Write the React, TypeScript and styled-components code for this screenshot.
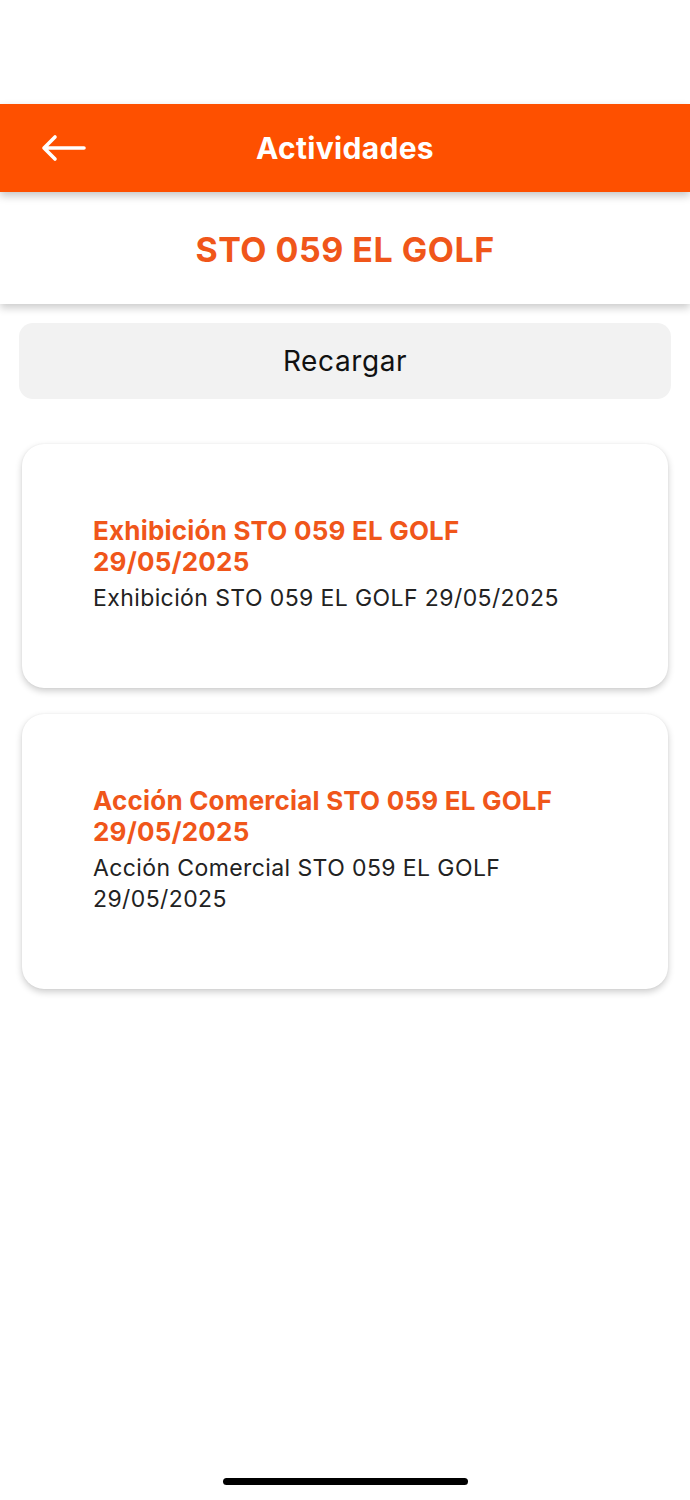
import React from "react";
import styled, { createGlobalStyle } from "styled-components";

const ORANGE = "#fe5000";
const TEXT_ORANGE = "#f0561a";

interface Activity {
  id: number;
  title: string;
  description: string;
}

const activities: Activity[] = [
  {
    id: 1,
    title: "Exhibición STO 059 EL GOLF 29/05/2025",
    description: "Exhibición STO 059 EL GOLF 29/05/2025"
  },
  {
    id: 2,
    title: "Acción Comercial STO 059 EL GOLF 29/05/2025",
    description: "Acción Comercial STO 059 EL GOLF 29/05/2025"
  }
];

const GlobalStyle = createGlobalStyle`
  html, body {
    margin: 0;
    padding: 0;
    background: #fff;
  }
  body {
    font-family: Inter, "Liberation Sans", Arial, sans-serif;
    -webkit-font-smoothing: antialiased;
  }
`;

const App: React.FC = () => {
  return (
    <>
      <GlobalStyle />
      <Screen>
        <StatusSpace />
        <TopBar>
          <BackButton aria-label="Volver">
            <svg width="46" height="28" viewBox="0 0 46 28" fill="none">
              <path
                d="M44 14H4M15 3L4 14l11 11"
                stroke="#fff"
                strokeWidth="3.6"
                strokeLinecap="round"
                strokeLinejoin="round"
              />
            </svg>
          </BackButton>
          <BarTitle>Actividades</BarTitle>
        </TopBar>
        <StoreBand>
          <StoreName>STO 059 EL GOLF</StoreName>
        </StoreBand>
        <Content>
          <ReloadButton>Recargar</ReloadButton>
          <List>
            {activities.map(a => (
              <Card key={a.id}>
                <CardTitle>{a.title}</CardTitle>
                <CardText>{a.description}</CardText>
              </Card>
            ))}
          </List>
        </Content>
        <HomeIndicator />
      </Screen>
    </>
  );
};

const Screen = styled.div`
  position: relative;
  width: 690px;
  height: 1500px;
  background: #fff;
  overflow: hidden;
  display: flex;
  flex-direction: column;
`;

const StatusSpace = styled.div`
  height: 104px;
  flex-shrink: 0;
`;

const TopBar = styled.header`
  position: relative;
  z-index: 2;
  height: 88px;
  flex-shrink: 0;
  background: ${ORANGE};
  display: flex;
  align-items: center;
  justify-content: center;
  box-shadow: 0 4px 8px rgba(0, 0, 0, 0.22);
`;

const BackButton = styled.button`
  position: absolute;
  left: 40px;
  top: 50%;
  transform: translateY(-50%);
  background: none;
  border: none;
  padding: 0;
  display: flex;
  cursor: pointer;
`;

const BarTitle = styled.h1`
  margin: 0;
  color: #fff;
  font-size: 30px;
  font-weight: 700;
  letter-spacing: 0.3px;
`;

const StoreBand = styled.div`
  position: relative;
  z-index: 1;
  height: 112px;
  flex-shrink: 0;
  background: #fff;
  display: flex;
  align-items: center;
  justify-content: center;
  box-shadow: 0 4px 8px rgba(0, 0, 0, 0.2);
`;

const StoreName = styled.h2`
  margin: 2px 0 0;
  color: ${TEXT_ORANGE};
  font-size: 34px;
  font-weight: 700;
  letter-spacing: 0.5px;
`;

const Content = styled.main`
  padding: 19px 19px 0;
  display: flex;
  flex-direction: column;
`;

const ReloadButton = styled.button`
  height: 76px;
  border: none;
  border-radius: 14px;
  background: #f2f2f2;
  color: #111;
  font-family: inherit;
  font-size: 28px;
  font-weight: 400;
  letter-spacing: 0.6px;
  cursor: pointer;
`;

const List = styled.div`
  margin-top: 45px;
  padding: 0 3px;
  display: flex;
  flex-direction: column;
  gap: 26px;
`;

const Card = styled.div`
  border-radius: 22px;
  background: #fff;
  padding: 71px 80px 74px 71px;
  box-shadow: 0 3px 7px rgba(0, 0, 0, 0.2), 0 0 2px rgba(0, 0, 0, 0.06);
`;

const CardTitle = styled.div`
  color: ${TEXT_ORANGE};
  font-size: 26px;
  font-weight: 700;
  line-height: 31px;
  letter-spacing: 0.2px;
`;

const CardText = styled.div`
  margin-top: 6px;
  color: #222;
  font-size: 23px;
  line-height: 31px;
  letter-spacing: 0.4px;
`;

const HomeIndicator = styled.div`
  position: absolute;
  left: 223px;
  bottom: 15px;
  width: 245px;
  height: 7px;
  border-radius: 4px;
  background: #000;
`;

export default App;
